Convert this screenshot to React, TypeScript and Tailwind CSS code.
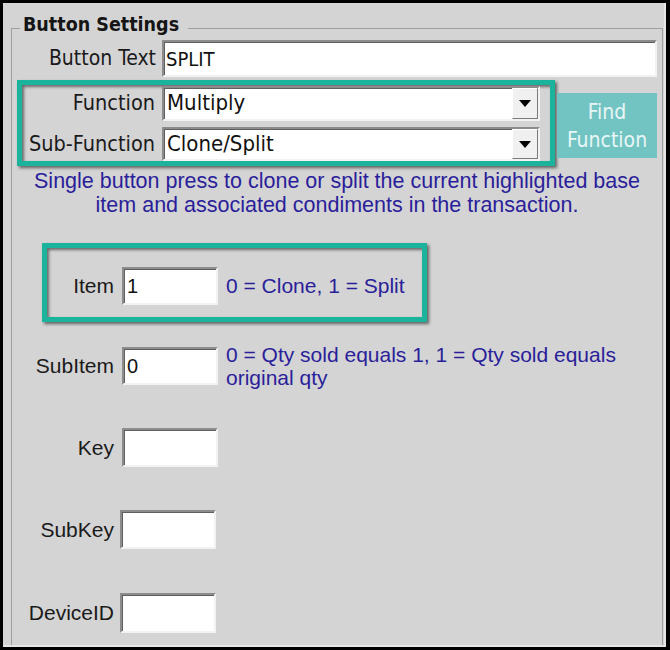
import React from "react";

const tahoma = "font-['DejaVu_Sans_Condensed','DejaVu_Sans',sans-serif] font-stretch-condensed";
const arial = "font-['Liberation_Sans',Arial,sans-serif]";
const sunken =
  "bg-white border-2 border-t-[#8c8c8c] border-l-[#8c8c8c] border-b-[#f2f2f2] border-r-[#f2f2f2] shadow-[inset_1px_1px_0_#5f5f5f]";
const teal = "border-[5px] border-[#1cb39c] shadow-[2px_2px_3px_rgba(0,0,0,0.55),inset_2px_2px_3px_rgba(0,0,0,0.5)]";

function Combo({ value, h }: { value: string; h: string }) {
  return (
    <div className={`flex w-[378px] ${h} ${sunken}`}>
      <span className={`flex-1 pl-[3px] text-[22px] leading-[30px] text-[#111] ${tahoma}`}>{value}</span>
      <div className="flex w-[26px] items-center justify-center border border-t-white border-l-white border-b-[#7a7a7a] border-r-[#7a7a7a] bg-[#f0f0f0]">
        <svg width="12" height="7" viewBox="0 0 12 7">
          <path d="M0 0 H12 L6 7 Z" fill="#000" />
        </svg>
      </div>
    </div>
  );
}

function Box({ value, extra }: { value?: string; extra: string }) {
  return (
    <div className={`flex items-center w-[96px] ${extra} ${sunken}`}>
      <span className={`pl-[3px] text-[20px] text-[#111] ${arial}`}>{value ?? ""}</span>
    </div>
  );
}

export default function App() {
  return (
    <div className="w-[670px] h-[650px] bg-black pt-[3px] pl-[3px] pr-[4px] pb-[3px]">
      <div className="flex h-full flex-col overflow-hidden bg-[#d4d4d4] pl-[8px] pr-[1px] border-r-2 border-b-2 border-[#e6e6e6]">
        <fieldset className="mt-[13px] grow border-t border-l border-r border-[#9f9f9f]">
          <legend className={`ml-[8px] pl-[3px] pr-[9px] pb-[6px] text-[19.5px] font-bold leading-[18px] text-[#151515] ${tahoma}`}>
            Button Settings
          </legend>

          {/* Button Text */}
          <div className="flex items-center">
            <div className={`w-[144px] text-right text-[21px] text-[#1a1a1a] ${tahoma}`}>Button Text</div>
            <div className={`ml-[6px] flex h-[37px] w-[495px] items-center ${sunken}`}>
              <span className={`pl-[2px] text-[20px] text-[#111] ${tahoma}`}>SPLIT</span>
            </div>
          </div>

          {/* Function group */}
          <div className="mt-[3px] flex items-start">
            <div className={`ml-[5px] h-[86px] w-[538px] ${teal} flex flex-col gap-[6px] pt-[1px]`}>
              <div className="flex items-center">
                <div className={`w-[133px] text-right text-[21.5px] text-[#1a1a1a] ${tahoma}`}>Function</div>
                <div className="ml-[7px]">
                  <Combo value="Multiply" h="h-[35px]" />
                </div>
              </div>
              <div className="flex items-center">
                <div className={`w-[133px] text-right text-[21.5px] text-[#1a1a1a] ${tahoma}`}>Sub-Function</div>
                <div className="ml-[7px]">
                  <Combo value="Clone/Split" h="h-[34px]" />
                </div>
              </div>
            </div>
            <div
              className={`ml-[2px] mt-[13px] flex h-[65px] w-[100px] flex-col items-center justify-center bg-[#72c4c3] text-[21px] leading-[28px] text-[#e9f6f6] ${tahoma}`}
            >
              <span>Find</span>
              <span>Function</span>
            </div>
          </div>

          {/* Description */}
          <p className={`mt-[3px] text-center text-[21.5px] leading-[24px] text-[#2a1e9a] ${arial}`}>
            Single button press to clone or split the current highlighted base
            <br />
            item and associated condiments in the transaction.
          </p>

          {/* Item */}
          <div className={`ml-[30px] mt-[26px] h-[79px] w-[385px] ${teal}`}>
            <div className="mt-[19px] flex h-[38px] items-center">
              <div className={`w-[67px] text-right text-[21px] text-[#1a1a1a] ${arial}`}>Item</div>
              <Box value="1" extra="ml-[8px] h-[38px]" />
              <span className={`ml-[8px] text-[21px] text-[#2a1e9a] ${arial}`}>0 = Clone, 1 = Split</span>
            </div>
          </div>

          {/* SubItem */}
          <div className="mt-[24px] flex h-[46px] items-start">
            <div className="mt-[1px] flex h-[38px] items-center">
              <div className={`w-[102px] text-right text-[21px] text-[#1a1a1a] ${arial}`}>SubItem</div>
              <Box value="0" extra="ml-[8px] h-[38px]" />
            </div>
            <div className={`-mt-[3px] ml-[8px] text-[21px] leading-[23px] text-[#2a1e9a] ${arial}`}>
              0 = Qty sold equals 1, 1 = Qty sold equals
              <br />
              original qty
            </div>
          </div>

          {/* Key */}
          <div className="mt-[36px] flex h-[39px] items-center">
            <div className={`w-[102px] text-right text-[21px] text-[#1a1a1a] ${arial}`}>Key</div>
            <Box extra="ml-[8px] h-[39px]" />
          </div>

          {/* SubKey */}
          <div className="mt-[43px] flex h-[39px] items-center">
            <div className={`w-[102px] text-right text-[21px] text-[#1a1a1a] ${arial}`}>SubKey</div>
            <Box extra="ml-[6px] h-[39px]" />
          </div>

          {/* DeviceID */}
          <div className="mt-[44px] flex h-[40px] items-center">
            <div className={`w-[102px] text-right text-[21px] text-[#1a1a1a] ${arial}`}>DeviceID</div>
            <Box extra="ml-[6px] h-[40px]" />
          </div>
        </fieldset>
      </div>
    </div>
  );
}
